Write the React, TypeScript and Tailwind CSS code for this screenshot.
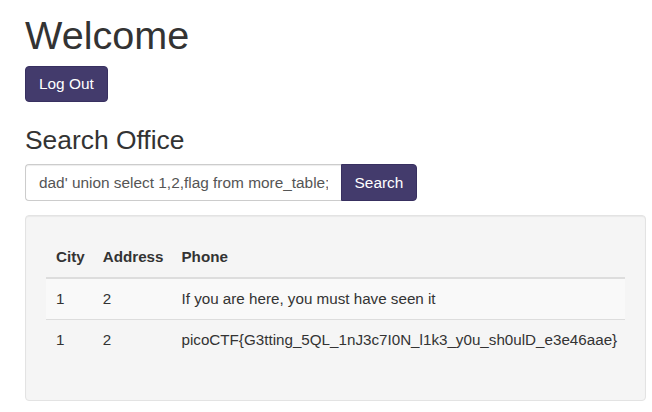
import { useState } from "react";

const rows = [
  { city: "1", address: "2", phone: "If you are here, you must have seen it" },
  { city: "1", address: "2", phone: "picoCTF{G3tting_5QL_1nJ3c7I0N_l1k3_y0u_sh0ulD_e3e46aae}" },
];

export default function App() {
  const [query, setQuery] = useState("dad' union select 1,2,flag from more_table;");

  return (
    <div className="min-h-screen bg-white text-[#333] font-['Liberation_Sans',Arial,sans-serif] text-[15.4px] leading-[22px]">
      <div className="pl-[25px] pr-[6px] pt-[14px]">
        <h1 className="text-[39.6px] leading-[1.1] font-normal mb-[8px]">Welcome</h1>
        <button className="h-[36px] px-[13px] rounded-[4px] bg-[#433b6c] border border-[#383060] text-white text-[15.4px]">
          Log Out
        </button>

        <h3 className="text-[26.4px] leading-[1.1] font-normal mt-[24px] mb-[9px]">Search Office</h3>
        <div className="flex w-[392px]">
          <input
            value={query}
            onChange={(e) => setQuery(e.target.value)}
            className="h-[37px] w-[316px] px-[13px] pt-[1px] border border-[#ccc] border-r-0 rounded-l-[4px] text-[15.4px] text-[#555] outline-none shadow-[inset_0_1px_1px_rgba(0,0,0,0.075)]"
          />
          <button className="h-[37px] w-[76px] pt-[1px] rounded-r-[4px] bg-[#433b6c] border border-[#383060] text-white text-[15.4px]">
            Search
          </button>
        </div>

        <div className="mt-[14px] bg-[#f5f5f5] border border-[#e3e3e3] rounded-[4px] px-[20px] pt-[21px] pb-[40px] shadow-[inset_0_1px_1px_rgba(0,0,0,0.05)] text-[15.2px]">
          <table className="w-full border-collapse text-left">
            <thead>
              <tr>
                <th className="pl-[10px] pr-[8px] py-[9px] font-bold border-b-2 border-[#ddd]">City</th>
                <th className="pl-[10px] pr-[8px] py-[9px] font-bold border-b-2 border-[#ddd]">Address</th>
                <th className="pl-[10px] pr-[2px] py-[9px] font-bold border-b-2 border-[#ddd] w-full">Phone</th>
              </tr>
            </thead>
            <tbody>
              {rows.map((r, i) => (
                <tr key={i} className={i % 2 === 0 ? "bg-[#f9f9f9]" : ""}>
                  <td className="pl-[10px] pr-[8px] py-[9px] border-t border-[#ddd]">{r.city}</td>
                  <td className="pl-[10px] pr-[8px] py-[9px] border-t border-[#ddd]">{r.address}</td>
                  <td className="pl-[10px] pr-[2px] py-[9px] border-t border-[#ddd] whitespace-nowrap">{r.phone}</td>
                </tr>
              ))}
            </tbody>
          </table>
        </div>
      </div>
    </div>
  );
}
